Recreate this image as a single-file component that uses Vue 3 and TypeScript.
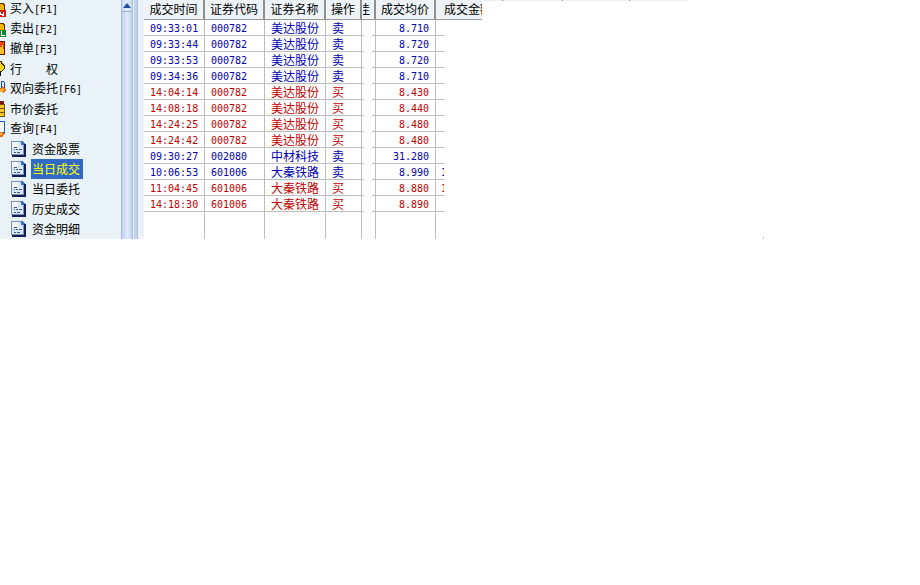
<script setup lang="ts">
interface Shape { d: string; fill: string }
interface Nav { label: string; key?: string; shapes: Shape[] }
interface Row { t: string; code: string; name: string; op: string; price: string; amt?: string }

const parents: Nav[] = [
  { label: '买入', key: '[F1]', shapes: [
    { d: 'M0 3h4v1h1v6H0z', fill: '#5a3000' },
    { d: 'M0 4h3v1h1v5H0z', fill: '#f4b400' },
    { d: 'M0 10h6v7H0z', fill: '#d01c1c' },
    { d: 'M0 12h1v2h2v-2h1v4H2v-1H0z', fill: '#ffffff' }
  ] },
  { label: '卖出', key: '[F2]', shapes: [
    { d: 'M0 3h4v1h1v6H0z', fill: '#5a3000' },
    { d: 'M0 4h3v1h1v5H0z', fill: '#f4b400' },
    { d: 'M0 10h6v7H0z', fill: '#0f8a2a' },
    { d: 'M1 11h1v4h3v1H1z', fill: '#ffffff' }
  ] },
  { label: '撤单', key: '[F3]', shapes: [
    { d: 'M0 1h5v14H0z', fill: '#6a1408' },
    { d: 'M0 2h4v12H0z', fill: '#e84a10' },
    { d: 'M0 7h2V5h1v4h1v5H0z', fill: '#f8c020' }
  ] },
  { label: '行', key: '　　权', shapes: [
    { d: 'M0 11h1v5H0z', fill: '#101010' },
    { d: 'M0 1h2l1 3 2 2v2l-2 2-1 2H0z', fill: '#3a3000' },
    { d: 'M0 2h1l1 3 2 2v1l-2 2-1 1H0z', fill: '#f8d818' }
  ] },
  { label: '双向委托', key: '[F6]', shapes: [
    { d: 'M1 1h3l1 2v6H1z', fill: '#2048b0' },
    { d: 'M2 2h2v7H2z', fill: '#e8f0ff' },
    { d: 'M0 8h2V6l4 4-3 4v-2H0z', fill: '#f06810' },
    { d: 'M0 9h2V8l2 2-2 2H0z', fill: '#f8b030' }
  ] },
  { label: '市价委托', shapes: [
    { d: 'M0 1h4v3H0z', fill: '#7a1810' },
    { d: 'M0 4h5v13H0z', fill: '#7a5010' },
    { d: 'M0 5h4v3H0zM0 9h4v3H0zM0 13h4v3H0z', fill: '#f8c828' }
  ] },
  { label: '查询', key: '[F4]', shapes: [
    { d: 'M0 1h5v13H0z', fill: '#2060c8' },
    { d: 'M0 2h4v10H0z', fill: '#f4f8ff' },
    { d: 'M0 12h3l1 2-1 3H0z', fill: '#f06810' },
    { d: 'M0 13h2v2H0z', fill: '#f8c040' }
  ] }
]
const children = ['资金股票', '当日成交', '当日委托', '历史成交', '资金明细']
const heads = ['成交时间', '证券代码', '证券名称', '操作', '佳', '成交均价', '成交金额']
const rows: Row[] = [
  { t: '09:33:01', code: '000782', name: '美达股份', op: '卖', price: '8.710' },
  { t: '09:33:44', code: '000782', name: '美达股份', op: '卖', price: '8.720' },
  { t: '09:33:53', code: '000782', name: '美达股份', op: '卖', price: '8.720' },
  { t: '09:34:36', code: '000782', name: '美达股份', op: '卖', price: '8.710' },
  { t: '14:04:14', code: '000782', name: '美达股份', op: '买', price: '8.430' },
  { t: '14:08:18', code: '000782', name: '美达股份', op: '买', price: '8.440' },
  { t: '14:24:25', code: '000782', name: '美达股份', op: '买', price: '8.480' },
  { t: '14:24:42', code: '000782', name: '美达股份', op: '买', price: '8.480' },
  { t: '09:30:27', code: '002080', name: '中材科技', op: '卖', price: '31.280' },
  { t: '10:06:53', code: '601006', name: '大秦铁路', op: '卖', price: '8.990', amt: '1' },
  { t: '11:04:45', code: '601006', name: '大秦铁路', op: '买', price: '8.880', amt: '1' },
  { t: '14:18:30', code: '601006', name: '大秦铁路', op: '买', price: '8.890' }
]
</script>

<template>
  <div class="page">
    <div class="topstrip"><i></i><i></i><i></i></div>
    <div class="speck"></div>
    <aside class="side">
      <div v-for="p in parents" :key="p.label" class="nav">
        <svg class="picon" width="6" height="18" viewBox="0 0 6 18" shape-rendering="crispEdges">
          <path v-for="s in p.shapes" :key="s.d" :d="s.d" :fill="s.fill" />
        </svg>
        <span>{{ p.label }}<span :class="p.key && p.key[0] === '[' ? 'fk' : ''">{{ p.key }}</span></span>
      </div>
      <div v-for="(c, i) in children" :key="c" class="nav child">
        <svg class="cicon" width="15" height="16" viewBox="0 0 15 16" shape-rendering="crispEdges">
          <path d="M0 0h10l3 3v11H0z" fill="#7f93a8" />
          <path d="M1 1h9v3h2v9H1z" fill="#d6e8fb" />
          <path d="M1 1h6v5H1z" fill="#f2f8fe" />
          <path d="M10 0h1l3 3v1h-4z" fill="#2f6fd0" />
          <path d="M3 6h3v1H3zM3 8h1v1H3zM5 8h2v1H5zM8 8h3v1H8zM3 11h2v1H3zM6 11h3v1H6z" fill="#4a5866" />
          <path d="M13 3h2v13H1v-2h12z" fill="#141e5c" />
        </svg>
        <span :class="['clabel', { sel: i === 1 }]">{{ c }}</span>
      </div>
    </aside>
    <div class="scroll">
      <div class="btn"><b></b></div>
      <div class="thumb"></div>
    </div>
    <div class="gutter"></div>
    <main class="tablewrap">
      <div class="head">
        <div v-for="(h, i) in heads" :key="h" :class="['hc', 'c' + i]"><span>{{ h }}</span></div>
      </div>
      <div class="body">
        <div v-for="r in rows" :key="r.t" :class="['row', r.op === '买' ? 'buy' : 'sell']">
          <div class="td c0">{{ r.t }}</div>
          <div class="td c1">{{ r.code }}</div>
          <div class="td c2 cjk">{{ r.name }}</div>
          <div class="td c3 cjk">{{ r.op }}</div>
          <div class="td c4"></div>
          <div class="td c5 num">{{ r.price }}</div>
          <div class="td c6">{{ r.amt }}</div>
        </div>
        <div class="row blank">
          <div class="td c0"></div>
          <div class="td c1"></div>
          <div class="td c2"></div>
          <div class="td c3"></div>
          <div class="td c4"></div>
          <div class="td c5"></div>
          <div class="td c6"></div>
        </div>
      </div>
    </main>
  </div>
</template>

<style>
html, body { margin: 0; background: #fff; }
</style>

<style scoped>
.page {
  position: relative;
  width: 920px;
  height: 585px;
  display: flex;
  align-items: flex-start;
  overflow: hidden;
  background: #fff;
  font-family: "Noto Sans CJK SC", "Liberation Sans", sans-serif;
  font-size: 12px;
  color: #000;
}
.topstrip {
  position: absolute;
  left: 482px;
  top: 0;
  width: 206px;
  height: 1px;
  background: #e8f1f6;
}
.topstrip i { position: absolute; top: 0; width: 1px; height: 1px; background: #909090; }
.topstrip i:nth-child(1) { left: 20px; }
.topstrip i:nth-child(2) { left: 80px; }
.topstrip i:nth-child(3) { left: 147px; }
.speck { position: absolute; left: 763px; top: 237px; width: 1px; height: 2px; background: #c8c8c8; }
.side {
  width: 121px;
  height: 239px;
  background: #e9f2f7;
  flex: none;
  overflow: hidden;
}
.nav {
  height: 20px;
  display: flex;
  align-items: center;
  line-height: 16px;
  margin-top: -1px;
  margin-bottom: 1px;
  white-space: nowrap;
}
.picon { flex: none; margin-right: 4px; align-self: flex-start; margin-top: 1px; }
.fk {
  font-family: "DejaVu Sans Mono", monospace;
  font-size: 10px;
}
.child .cicon { flex: none; margin: 0 5px 0 11px; }
.clabel { padding: 0 3px 0 1px; }
.sel { background: #316ac5; color: #ff0; height: 20px; line-height: 20px; }
.scroll {
  width: 12px;
  height: 239px;
  flex: none;
  box-sizing: border-box;
  border-left: 1px solid #a9bcd9;
  border-right: 1px solid #a9bcd9;
}
.btn {
  height: 12px;
  background: linear-gradient(90deg, #c9d9f2, #e4edfb 50%, #c9d9f2);
  border-bottom: 1px solid #9db2d2;
  display: flex;
  justify-content: center;
  padding-top: 3px;
  box-sizing: border-box;
}
.btn b {
  width: 0; height: 0;
  border-left: 4px solid transparent;
  border-right: 4px solid transparent;
  border-bottom: 5px solid #1d4f9c;
}
.thumb { height: 227px; background: linear-gradient(90deg, #bfd2f0, #e2ebfa 55%, #bfd2f0); }
.gutter {
  width: 11px;
  height: 239px;
  flex: none;
  background: linear-gradient(90deg, #e9f2f7 0 1px, #c2d3ec 1px 4px, #a9bcd9 4px 5px, #e9f2f7 5px);
}
.tablewrap { width: 338px; flex: none; height: 239px; overflow: hidden; }
.head {
  display: flex;
  height: 20px;
  box-sizing: border-box;
  background: #edf3f7;
  border-bottom: 1px solid #9a9a9a;
}
.hc {
  flex: none;
  box-sizing: border-box;
  height: 19px;
  line-height: 18px;
  text-align: center;
  overflow: hidden;
  white-space: nowrap;
  border-right: 2px solid #8f8f8f;
}
.hc.c4 span { display: block; width: 12px; margin-left: -4px; clip-path: inset(0 0 0 5px); }
.hc.c6 { border-right: 0; padding-left: 8px; text-align: left; }
.c0 { width: 61px; }
.c1 { width: 60px; }
.c2 { width: 61px; }
.c3 { width: 36px; }
.c4 { width: 14px; }
.c5 { width: 60px; }
.c6 { width: 46px; }
.body { width: 299px; }
.row { display: flex; height: 16px; }
.td {
  flex: none;
  box-sizing: border-box;
  height: 16px;
  line-height: 18px;
  padding-left: 6px;
  border-right: 1px solid #bdbdbd;
  border-bottom: 1px solid #bdbdbd;
  font-family: "DejaVu Sans Mono", "Noto Sans CJK SC", monospace;
  font-size: 10px;
  white-space: nowrap;
  overflow: hidden;
}
.td.cjk { font-family: "Noto Sans CJK SC", sans-serif; font-size: 12px; line-height: 15px; }
.td.num { text-align: right; padding: 0 6px 0 0; }
.td.c4 {
  border-bottom: 0;
  padding: 0;
  background:
    linear-gradient(#bdbdbd, #bdbdbd) left bottom / 2px 1px no-repeat,
    linear-gradient(#bdbdbd, #bdbdbd) right bottom / 3px 1px no-repeat;
}
.td.c6 { border-right: 0; width: 8px; padding-left: 5px; }
.sell .td { color: #0000b0; }
.buy .td { color: #c00000; }
.blank, .blank .td { height: 27px; border-bottom: 0; background: none; }
.blank .td.c4 { background: none; }
</style>
